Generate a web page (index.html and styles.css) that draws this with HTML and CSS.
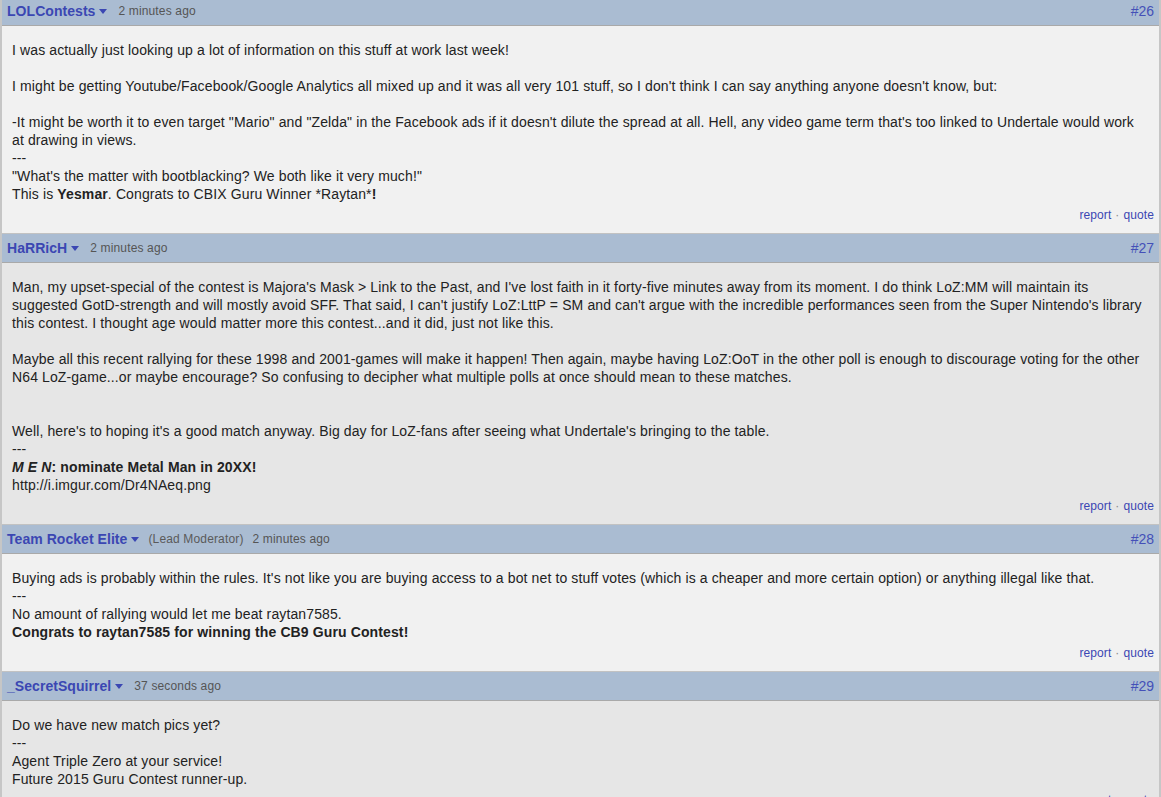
FILE: index.html
```html
<!DOCTYPE html>
<html>
<head>
<meta charset="utf-8">
<link rel="stylesheet" href="styles.css">
</head>
<body>
<div class="thread">
  <div class="post odd">
    <div class="hdr">
      <div class="who"><a class="user">LOLContests</a><span class="caret"></span><span class="time">2 minutes ago</span></div>
      <a class="num">#26</a>
    </div>
    <div class="body">
      I was actually just looking up a lot of information on this stuff at work last week!<br><br>
      I might be getting Youtube/Facebook/Google Analytics all mixed up and it was all very 101 stuff, so I don't think I can say anything anyone doesn't know, but:<br><br>
      -It might be worth it to even target "Mario" and "Zelda" in the Facebook ads if it doesn't dilute the spread at all. Hell, any video game term that's too linked to Undertale would work at drawing in views.<br>
      ---<br>
      "What's the matter with bootblacking? We both like it very much!"<br>
      This is <b>Yesmar</b>. Congrats to CBIX Guru Winner *Raytan*<b>!</b>
    </div>
    <div class="actions"><a>report</a><span class="dot">·</span><a>quote</a></div>
  </div>

  <div class="post even">
    <div class="hdr">
      <div class="who"><a class="user">HaRRicH</a><span class="caret"></span><span class="time">2 minutes ago</span></div>
      <a class="num">#27</a>
    </div>
    <div class="body">
      Man, my upset-special of the contest is Majora's Mask &gt; Link to the Past, and I've lost faith in it forty-five minutes away from its moment. I do think LoZ:MM will maintain its suggested GotD-strength and will mostly avoid SFF. That said, I can't justify LoZ:LttP = SM and can't argue with the incredible performances seen from the Super Nintendo's library this contest. I thought age would matter more this contest...and it did, just not like this.<br><br>
      Maybe all this recent rallying for these 1998 and 2001-games will make it happen! Then again, maybe having LoZ:OoT in the other poll is enough to discourage voting for the other N64 LoZ-game...or maybe encourage? So confusing to decipher what multiple polls at once should mean to these matches.<br><br><br>
      Well, here's to hoping it's a good match anyway. Big day for LoZ-fans after seeing what Undertale's bringing to the table.<br>
      ---<br>
      <b><i>M E N</i>: nominate Metal Man in 20XX!</b><br>
      http://i.imgur.com/Dr4NAeq.png
    </div>
    <div class="actions"><a>report</a><span class="dot">·</span><a>quote</a></div>
  </div>

  <div class="post odd">
    <div class="hdr">
      <div class="who"><a class="user">Team Rocket Elite</a><span class="caret"></span><span class="role">(Lead Moderator)</span><span class="time">2 minutes ago</span></div>
      <a class="num">#28</a>
    </div>
    <div class="body">
      Buying ads is probably within the rules. It's not like you are buying access to a bot net to stuff votes (which is a cheaper and more certain option) or anything illegal like that.<br>
      ---<br>
      No amount of rallying would let me beat raytan7585.<br>
      <b>Congrats to raytan7585 for winning the CB9 Guru Contest!</b>
    </div>
    <div class="actions"><a>report</a><span class="dot">·</span><a>quote</a></div>
  </div>

  <div class="post even">
    <div class="hdr">
      <div class="who"><a class="user">_SecretSquirrel</a><span class="caret"></span><span class="time">37 seconds ago</span></div>
      <a class="num">#29</a>
    </div>
    <div class="body">
      Do we have new match pics yet?<br>
      ---<br>
      Agent Triple Zero at your service!<br>
      Future 2015 Guru Contest runner-up.
    </div>
    <div class="actions"><a>report</a><span class="dot">·</span><a>quote</a></div>
  </div>
</div>
</body>
</html>
```

FILE: styles.css
```css
html, body {
  margin: 0;
  padding: 0;
  background: #ffffff;
}
body {
  font-family: "Liberation Sans", Arial, sans-serif;
  font-size: 14px;
  color: #222222;
  overflow: hidden;
}
.thread {
  margin-top: -3px;
  border-left: 2px solid #c6c6c6;
  border-right: 2px solid #c6c6c6;
}
.post {
  border-bottom: 1px solid #c2c2c2;
}
.post.odd { background: #f1f1f1; }
.post.even { background: #e6e6e6; }
.hdr {
  display: flex;
  align-items: center;
  justify-content: space-between;
  height: 28px;
  padding: 0 5px;
  background: #aabcd2;
  border-bottom: 1px solid #a9a9a9;
}
.who {
  display: flex;
  align-items: center;
}
.user {
  color: #3b47b3;
  font-weight: bold;
  font-size: 14px;
  letter-spacing: 0.05px;
}
.caret {
  display: inline-block;
  width: 0;
  height: 0;
  margin: 1px 0 0 4px;
  border-left: 4px solid transparent;
  border-right: 4px solid transparent;
  border-top: 5px solid #3b47b3;
}
.role {
  margin-left: 9px;
  color: #5a5a5a;
  font-size: 12px;
  letter-spacing: 0.15px;
}
.time {
  margin-left: 11px;
  color: #555555;
  font-size: 12px;
  letter-spacing: 0.15px;
}
.role + .time { margin-left: 9px; }
.num {
  color: #4450b8;
  font-size: 14px;
}
.body {
  padding: 15px 10px 0 10px;
  line-height: 18px;
  letter-spacing: 0.12px;
}
.actions {
  display: flex;
  justify-content: flex-end;
  margin-top: 3px;
  padding: 0 5px 9px 0;
  line-height: 18px;
  font-size: 12px;
  letter-spacing: 0.1px;
}
.actions a { color: #3b47b3; }
.dot {
  color: #888888;
  margin: 0 4px;
}
```
